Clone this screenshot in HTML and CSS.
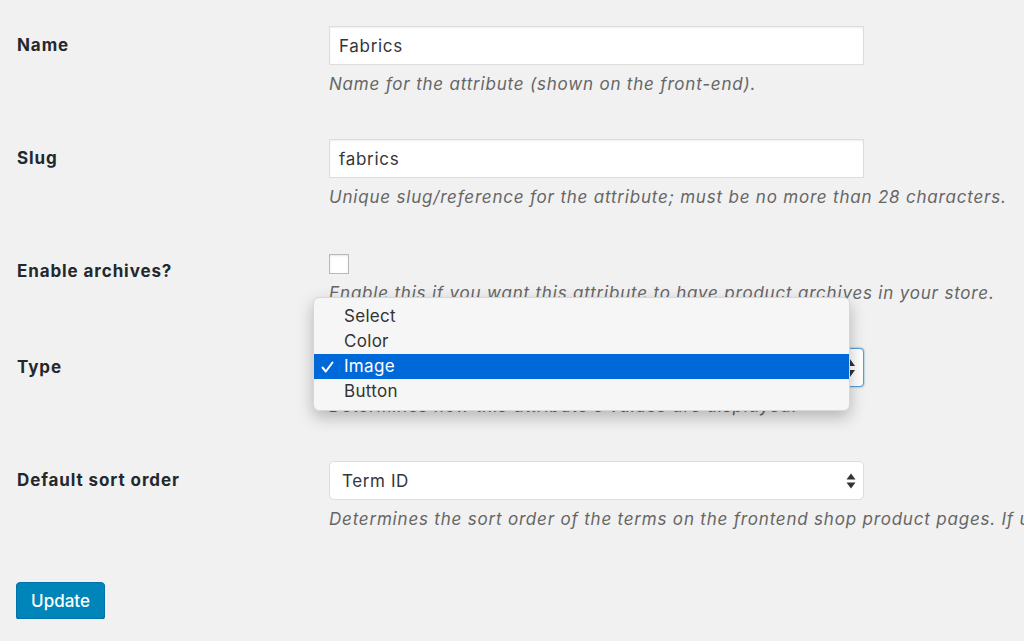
FILE: index.html
```html
<!DOCTYPE html>
<html>
<head>
<meta charset="utf-8">
<link rel="stylesheet" href="styles.css">
</head>
<body>
<div class="page">
  <div class="row">
    <div class="label">Name</div>
    <div class="field">
      <div class="input">Fabrics</div>
      <p class="desc">Name for the attribute (shown on the front-end).</p>
    </div>
  </div>
  <div class="row">
    <div class="label">Slug</div>
    <div class="field">
      <div class="input">fabrics</div>
      <p class="desc">Unique slug/reference for the attribute; must be no more than 28 characters.</p>
    </div>
  </div>
  <div class="row">
    <div class="label">Enable archives?</div>
    <div class="field">
      <div class="checkbox"></div>
      <p class="desc">Enable this if you want this attribute to have product archives in your store.</p>
    </div>
  </div>
  <div class="row">
    <div class="label">Type</div>
    <div class="field">
      <div class="select focused">
        <span>Image</span>
        <svg class="arrows" width="12" height="22" viewBox="0 0 12 22"><path d="M6 2 L11 9 L1 9 Z" fill="#333"/><path d="M6 20 L11 13 L1 13 Z" fill="#333"/></svg>
      </div>
      <p class="desc">Determines how this attribute's values are displayed.</p>
      <div class="menu">
        <div class="opt">Select</div>
        <div class="opt">Color</div>
        <div class="opt sel"><svg class="check" width="13" height="12" viewBox="0 0 13 12"><path d="M1.5 6.5 L4.8 10.5 L11.5 1.5" fill="none" stroke="#fff" stroke-width="2" stroke-linecap="round" stroke-linejoin="round"/></svg>Image</div>
        <div class="opt">Button</div>
      </div>
    </div>
  </div>
  <div class="row">
    <div class="label">Default sort order</div>
    <div class="field">
      <div class="select rounded">
        <span>Term ID</span>
        <svg class="arrows" width="10" height="18" viewBox="0 0 10 18"><path d="M5 1.5 L9.5 7.5 L0.5 7.5 Z" fill="#333"/><path d="M5 16.5 L9.5 10.5 L0.5 10.5 Z" fill="#333"/></svg>
      </div>
      <p class="desc">Determines the sort order of the terms on the frontend shop product pages. If using custom ordering, you can drag and drop the terms in this attribute.</p>
    </div>
  </div>
  <div class="actions">
    <button class="btn">Update</button>
  </div>
</div>
</body>
</html>
```

FILE: styles.css
```css
html, body {
  margin: 0;
  padding: 0;
  background: #f1f1f1;
  overflow: hidden;
}
body {
  font-family: Inter, "Open Sans", Arial, sans-serif;
  font-size: 17px;
  color: #32373c;
  width: 1024px;
  height: 641px;
}
.page {
  padding-left: 17px;
  width: 1007px;
  overflow: hidden;
}
.row {
  display: grid;
  grid-template-columns: 312px 535px;
  padding: 26px 0 17px;
}
.label {
  font-weight: 700;
  color: #23282d;
  line-height: 24px;
  margin-top: 7px;
  letter-spacing: 0.9px;
}
.field {
  position: relative;
}
.input {
  height: 39px;
  box-sizing: border-box;
  background: #fff;
  border: 1px solid #ddd;
  box-shadow: inset 0 1px 2px rgba(0,0,0,0.07);
  padding: 0 9px;
  line-height: 38px;
  color: #32373c;
  letter-spacing: 0.7px;
}
.desc {
  margin: 7px 0 0;
  font-style: italic;
  color: #666;
  line-height: 24px;
  white-space: nowrap;
  letter-spacing: 0.8px;
}
.checkbox {
  width: 20px;
  height: 20px;
  box-sizing: border-box;
  background: #fff;
  border: 1px solid #b4b9be;
  margin-top: 2px;
  box-shadow: inset 0 1px 2px rgba(0,0,0,0.1);
}
.select {
  height: 39px;
  box-sizing: border-box;
  background: #fff;
  border: 1px solid #ddd;
  display: flex;
  align-items: center;
  justify-content: space-between;
  padding: 0 7px 0 12px;
  color: #32373c;
  letter-spacing: 0.6px;
}
.select.rounded {
  border-radius: 5px;
}
.select.focused {
  border: 1px solid #5b9dd9;
  border-radius: 4px;
  box-shadow: 0 0 2px rgba(30,140,190,0.8);
}
.arrows {
  display: block;
}
.menu {
  position: absolute;
  left: -16px;
  top: -51px;
  width: 537px;
  box-sizing: border-box;
  background: #f6f6f6;
  border-radius: 6px;
  border: 1px solid #d8d8d8;
  box-shadow: 0 6px 16px rgba(0,0,0,0.25);
  padding: 6px 0 6px;
  color: #333;
  letter-spacing: 0.3px;
}
.opt {
  height: 25px;
  line-height: 25px;
  padding-left: 30px;
  position: relative;
}
.opt.sel {
  background: #0069d9;
  color: #fff;
}
.check {
  position: absolute;
  left: 7px;
  top: 7px;
}
.actions {
  padding-top: 34px;
}
.btn {
  font-family: Inter, "Open Sans", Arial, sans-serif;
  font-size: 17px;
  font-weight: 500;
  color: #fff;
  background: #0085ba;
  border: 1px solid #0073aa;
  border-radius: 4px;
  box-shadow: 0 1px 0 #006799;
  height: 37px;
  width: 89px;
  padding: 0;
  margin-left: -1px;
  cursor: pointer;
}
```
